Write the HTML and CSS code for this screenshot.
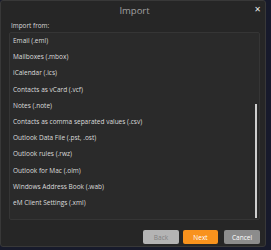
FILE: index.html
```html
<html lang="en">

<head>
    <meta charset="UTF-8">
    <title>Import</title>
    <link rel="stylesheet" href="styles.css">
</head>

<body>
    <div id="dialog">
        <div id="titlebar">
            <span id="title">Import</span>
            <span id="close">&#x2715;</span>
        </div>
        <div id="label">Import from:</div>
        <div id="listbox">
            <ul id="list">
                <li>Email (.eml)</li>
                <li>Mailboxes (.mbox)</li>
                <li>iCalendar (.ics)</li>
                <li>Contacts as vCard (.vcf)</li>
                <li>Notes (.note)</li>
                <li>Contacts as comma separated values (.csv)</li>
                <li>Outlook Data File (.pst, .ost)</li>
                <li>Outlook rules (.rwz)</li>
                <li>Outlook for Mac (.olm)</li>
                <li>Windows Address Book (.wab)</li>
                <li>eM Client Settings (.xml)</li>
            </ul>
            <div id="thumb"></div>
        </div>
        <div id="buttons">
            <button class="btn back">Back</button>
            <button class="btn next">Next</button>
            <button class="btn cancel">Cancel</button>
        </div>
    </div>
</body>

</html>
```

FILE: styles.css
```css
body {
    margin: 0;
    background-color: #171a2b;
    font-family: "Open Sans", "DejaVu Sans", sans-serif;
    width: 271px;
    height: 250px;
    overflow: hidden;
}
#dialog {
    width: 266px;
    height: 247px;
    box-sizing: border-box;
    background-color: #262626;
    border: 1px solid #383838;
    border-radius: 3px;
    padding: 0 5px 0 8px;
}
#titlebar {
    position: relative;
    height: 19px;
    text-align: center;
}
#title {
    color: #a0a0a0;
    font-size: 9.5px;
    line-height: 19px;
}
#close {
    position: absolute;
    right: -1px;
    top: 2px;
    color: #e6e6e6;
    font-size: 8px;
    font-weight: bold;
}
#label {
    color: #d8d8d8;
    font-size: 6.4px;
    height: 12px;
    line-height: 12px;
    padding-left: 2px;
}
#listbox {
    position: relative;
    height: 188px;
    box-sizing: border-box;
    background-color: #2a2a2a;
    border: 1px solid #353535;
    border-radius: 2px;
}
#list {
    list-style-type: none;
    margin: 0;
    padding: 0 0 0 3px;
}
#list li {
    color: #dcdcdc;
    font-size: 6.5px;
    height: 16.2px;
    line-height: 16.2px;
}
#thumb {
    position: absolute;
    right: 2px;
    top: 71px;
    width: 2px;
    height: 114px;
    background-color: #cfcfcf;
}
#buttons {
    display: flex;
    justify-content: flex-end;
    gap: 4px;
    padding-top: 10px;
}
.btn {
    width: 36px;
    height: 14px;
    border: none;
    border-radius: 2px;
    font-family: "Open Sans", "DejaVu Sans", sans-serif;
    font-size: 6.5px;
    padding: 0;
    color: white;
}
.back {
    background-color: #b4b4b4;
    color: #808080;
}
.next {
    width: 35px;
    background-color: #f8921d;
    margin-right: 2px;
}
.cancel {
    background-color: #8c8c8c;
}
```
